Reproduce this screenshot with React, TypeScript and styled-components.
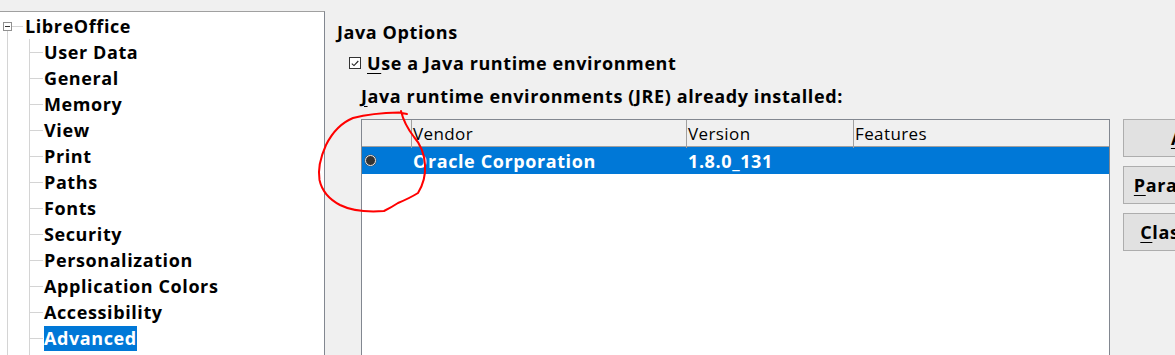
import React from "react";
import styled, { createGlobalStyle } from "styled-components";

const Global = createGlobalStyle`
  html, body { margin: 0; padding: 0; background: #f0f0f0; overflow: hidden; }
  body { font-family: "Open Sans", "Noto Sans", sans-serif; color: #000; }
`;

const Page = styled.div`
  position: relative;
  width: 1175px;
  height: 355px;
  display: flex;
  align-items: stretch;
  background: #f0f0f0;
  overflow: hidden;
`;

const TreePane = styled.div`
  margin-top: 11px;
  width: 324px;
  flex: 0 0 324px;
  background: #fff;
  border-top: 1px solid #a0a0a0;
  border-right: 1px solid #828790;
  padding-top: 1px;
  font-size: 18px;
  letter-spacing: 0.6px;
  font-weight: 700;
`;

const RootNode = styled.div`
  position: relative;
  &::after {
    content: "";
    position: absolute;
    left: 7px;
    top: 18px;
    bottom: 0;
    border-left: 1px solid #d4d4d4;
  }
`;

const RootRow = styled.div`
  display: flex;
  align-items: center;
  height: 26px;
  padding-left: 3px;
`;

const Expander = styled.span`
  position: relative;
  z-index: 1;
  box-sizing: border-box;
  width: 9px;
  height: 9px;
  border: 1px solid #919191;
  background: #fff;
  display: flex;
  align-items: center;
  justify-content: center;
  &::before {
    content: "";
    width: 5px;
    height: 1px;
    background: #333;
  }
`;

const Connector = styled.span`
  width: 11px;
  height: 1px;
  background: #d4d4d4;
  margin-right: 2px;
`;

const ChildGroup = styled.div`
  margin-left: 29px;
  border-left: 1px solid #d4d4d4;
  padding-bottom: 40px;
`;

const ChildRow = styled.div`
  position: relative;
  display: flex;
  align-items: center;
  height: 26px;
  padding-left: 14px;
  &::before {
    content: "";
    position: absolute;
    left: 0;
    top: 50%;
    width: 13px;
    border-top: 1px solid #d4d4d4;
  }
`;

const NodeLabel = styled.span<{ $selected?: boolean }>`
  line-height: 25px;
  white-space: nowrap;
  background: ${(p) => (p.$selected ? "#0078d7" : "transparent")};
  color: ${(p) => (p.$selected ? "#fff" : "#000")};
`;

const Content = styled.div`
  flex: 1;
  padding: 19px 0 0 12px;
  font-size: 18px;
  letter-spacing: 0.6px;
  font-weight: 700;
`;

const Heading = styled.div`
  line-height: 26px;
  height: 26px;
`;

const Section = styled.div`
  padding-left: 12px;
`;

const CheckRow = styled.div`
  display: flex;
  align-items: center;
  height: 26px;
  margin-top: 5px;
  gap: 6px;
`;

const CheckBox = styled.span`
  box-sizing: border-box;
  width: 12px;
  height: 12px;
  border: 1px solid #333;
  background: #fff;
  display: flex;
  align-items: center;
  justify-content: center;
`;

const Mn = styled.span`
  text-decoration: underline;
  text-underline-offset: 3px;
  text-decoration-thickness: 1px;
`;

const Label = styled.div`
  margin-top: 7px;
  margin-left: 12px;
  line-height: 26px;
  height: 26px;
`;

const TableArea = styled.div`
  display: flex;
  gap: 13px;
  margin-top: 10px;
  margin-left: 24px;
`;

const Table = styled.div`
  width: 749px;
  flex: 0 0 749px;
  height: 260px;
  box-sizing: border-box;
  border: 1px solid #828790;
  background: #fff;
`;

const columns = "50px 275px 167px 1fr";

const HeaderRow = styled.div`
  display: grid;
  grid-template-columns: ${columns};
  height: 26px;
  background: #f0f0f0;
  border-bottom: 1px solid #a0a0a0;
  font-size: 17px;
  letter-spacing: 0.4px;
  font-weight: 400;
`;

const HeaderCell = styled.div`
  border-right: 1px solid #a0a0a0;
  padding-left: 1px;
  line-height: 28px;
  &:last-child { border-right: none; }
`;

const DataRow = styled.div<{ $selected?: boolean }>`
  display: grid;
  grid-template-columns: ${columns};
  height: 27px;
  align-items: center;
  background: ${(p) => (p.$selected ? "#0078d7" : "#fff")};
  color: ${(p) => (p.$selected ? "#fff" : "#000")};
`;

const RadioCell = styled.div`
  padding-left: 3px;
  display: flex;
  align-items: center;
`;

const Radio = styled.span`
  box-sizing: border-box;
  width: 11px;
  height: 11px;
  border-radius: 50%;
  background: #333;
  border: 1px solid #e8e8e8;
  box-shadow: 0 0 0 0.5px #555;
`;

const Cell = styled.div`
  padding-left: 1px;
  white-space: nowrap;
`;

const Buttons = styled.div`
  display: flex;
  flex-direction: column;
  gap: 9px;
`;

const Button = styled.div`
  box-sizing: border-box;
  width: 150px;
  flex: 0 0 38px;
  height: 38px;
  background: #e1e1e1;
  border: 1px solid #adadad;
  display: flex;
  align-items: center;
  justify-content: center;
  white-space: nowrap;
`;

const Annotation = styled.svg`
  position: absolute;
  left: 0;
  top: 0;
  pointer-events: none;
`;

const children = [
  "User Data",
  "General",
  "Memory",
  "View",
  "Print",
  "Paths",
  "Fonts",
  "Security",
  "Personalization",
  "Application Colors",
  "Accessibility",
  "Advanced",
];

export default function App() {
  return (
    <>
      <Global />
      <Page>
        <TreePane>
          <RootNode>
            <RootRow>
              <Expander />
              <Connector />
              <NodeLabel>LibreOffice</NodeLabel>
            </RootRow>
            <ChildGroup>
              {children.map((c) => (
                <ChildRow key={c}>
                  <NodeLabel $selected={c === "Advanced"}>{c}</NodeLabel>
                </ChildRow>
              ))}
            </ChildGroup>
          </RootNode>
        </TreePane>
        <Content>
          <Heading>Java Options</Heading>
          <Section>
            <CheckRow>
              <CheckBox>
                <svg width="8" height="7" viewBox="0 0 8 7">
                  <path d="M0.8 3.6 L3 5.6 L7.3 1" fill="none" stroke="#222" strokeWidth="1.1" />
                </svg>
              </CheckBox>
              <span>
                <Mn>U</Mn>se a Java runtime environment
              </span>
            </CheckRow>
            <Label>
              <Mn>J</Mn>ava runtime environments (JRE) already installed:
            </Label>
          </Section>
          <TableArea>
            <Table>
              <HeaderRow>
                <HeaderCell />
                <HeaderCell>Vendor</HeaderCell>
                <HeaderCell>Version</HeaderCell>
                <HeaderCell>Features</HeaderCell>
              </HeaderRow>
              <DataRow $selected>
                <RadioCell>
                  <Radio />
                </RadioCell>
                <Cell>Oracle Corporation</Cell>
                <Cell>1.8.0_131</Cell>
                <Cell />
              </DataRow>
            </Table>
            <Buttons>
              <Button>
                <span>
                  <Mn>A</Mn>dd...
                </span>
              </Button>
              <Button>
                <span>
                  <Mn>P</Mn>arameters...
                </span>
              </Button>
              <Button>
                <span>
                  <Mn>C</Mn>lass Path...
                </span>
              </Button>
            </Buttons>
          </TableArea>
        </Content>
        <Annotation width="1175" height="355" viewBox="0 0 1175 355">
          <path
            d="M407 114 L399 112.5 Q372 113 353 118 Q336 125 326 145 Q317 165 319.5 180 Q323 196 340 205 Q356 213 384 211 Q392 207 398 203 Q410 198 418 193 Q426 180 425 165 Q424 148 414 137 Q404 124 401 111"
            fill="none"
            stroke="#f00"
            strokeWidth="2"
            strokeLinecap="round"
            strokeLinejoin="round"
          />
        </Annotation>
      </Page>
    </>
  );
}
